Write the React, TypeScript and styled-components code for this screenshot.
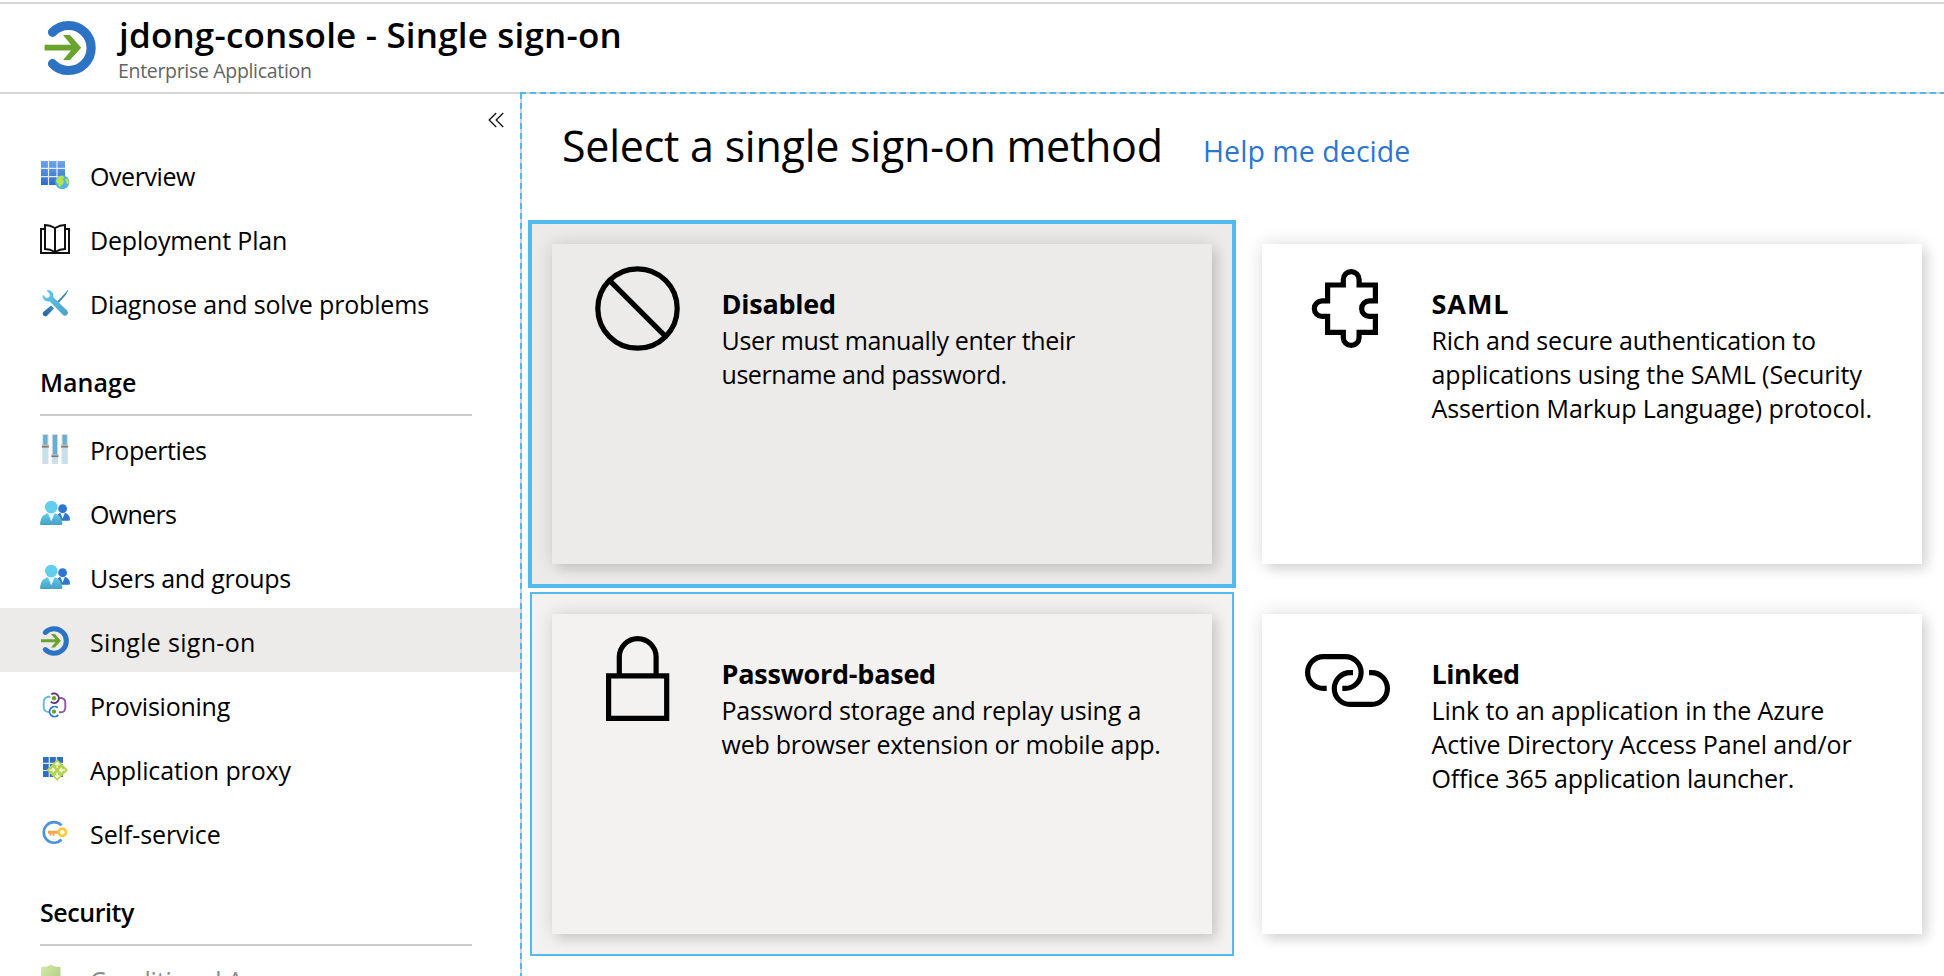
import React from 'react';
import styled, { createGlobalStyle, css } from 'styled-components';

const GlobalStyle = createGlobalStyle`
  * { box-sizing: border-box; }
  body {
    margin: 0;
    background: #fff;
    color: #000;
    font-family: 'Open Sans', 'Noto Sans', sans-serif;
    overflow: hidden;
  }
`;

const Page = styled.div`
  display: flex;
  flex-direction: column;
  height: 976px;
  padding-top: 2px;
  overflow: hidden;
`;

const Header = styled.header`
  display: flex;
  flex: none;
  height: 92px;
  padding-left: 44px;
  border-top: 2px solid #d6d6d6;
  border-bottom: 2px solid #d6d6d6;
`;

const HeaderLogo = styled.div`
  width: 52px;
  height: 56px;
  margin-top: 16px;
  svg { display: block; width: 52px; height: 56px; }
`;

const HeaderText = styled.div`
  display: flex;
  flex-direction: column;
  margin-left: 22px;
`;

const AppTitle = styled.h1`
  margin: 7px 0 0;
  padding-left: 1px;
  font-size: 35px;
  font-weight: 600;
  line-height: 48px;
  letter-spacing: 0.18px;
  white-space: pre;
`;

const AppKind = styled.div`
  margin-top: -1px;
  font-size: 19.5px;
  line-height: 26px;
  letter-spacing: -0.32px;
  color: #646464;
`;

const Body = styled.div`
  display: flex;
  flex: 1;
  min-height: 0;
`;

const Sidebar = styled.nav`
  flex: none;
  width: 520px;
  overflow: hidden;
`;

const CollapseBar = styled.div`
  display: flex;
  justify-content: flex-end;
  height: 48px;
  padding: 18px 16px 0 0;
  svg { display: block; width: 16px; height: 16px; }
`;

const NavRow = styled.a<{ $selected?: boolean; $faded?: boolean }>`
  display: flex;
  gap: 20px;
  height: 64px;
  padding-left: 40px;
  background: ${(p) => (p.$selected ? '#edebe9' : 'transparent')};
  color: ${(p) => (p.$faded ? '#8a8a8a' : '#000')};
`;

const NavIcon = styled.span`
  width: 30px;
  height: 30px;
  margin-top: 18px;
  svg { display: block; width: 30px; height: 30px; overflow: visible; }
`;

const NavLabel = styled.span<{ $track: number }>`
  margin-top: 16px;
  font-size: 25px;
  line-height: 36px;
  letter-spacing: ${(p) => p.$track}px;
  white-space: nowrap;
`;

const SectionHeading = styled.h2<{ $track: number }>`
  height: 82px;
  margin: 0 48px 0 40px;
  padding-top: 16px;
  border-bottom: 2px solid #ccc;
  font-size: 25px;
  font-weight: 600;
  line-height: 64px;
  letter-spacing: ${(p) => p.$track}px;
`;

const dash = css`#50b8ee 0 6px, #d2d2d2 6px 10px`;

const Main = styled.main`
  flex: 1;
  min-width: 0;
  margin-top: -2px;
  padding: 2px 0 0 2px;
  background:
    repeating-linear-gradient(to right, ${dash}) 0 0 / 100% 2px no-repeat,
    repeating-linear-gradient(to bottom, ${dash}) 0 1px / 2px 100% no-repeat,
    #fff;
`;

const HeadingRow = styled.div`
  display: flex;
  align-items: baseline;
  height: 128px;
  padding: 23px 0 0 40px;
`;

const PageHeading = styled.h2`
  margin: 0;
  width: 641px;
  font-size: 43px;
  font-weight: 400;
  line-height: 58px;
  letter-spacing: -0.25px;
  white-space: nowrap;
`;

const HelpLink = styled.a`
  font-size: 28.5px;
  letter-spacing: 0.06px;
  color: #2b76d2;
`;

const MethodGrid = styled.div`
  display: grid;
  grid-template-columns: 704px 704px;
  grid-auto-rows: 364px;
  gap: 6px;
  padding-left: 8px;
`;

type Tone = 'plain' | 'hover' | 'selected';
const toneFill: Record<Tone, string> = { plain: '#fff', hover: '#f3f2f0', selected: '#edebe9' };

const MethodCell = styled.div<{ $tone: Tone }>`
  padding: 20px;
  border: 2px solid ${(p) => (p.$tone === 'plain' ? 'transparent' : '#53baee')};
  background: ${(p) => toneFill[p.$tone]};
  box-shadow: ${(p) => (p.$tone === 'selected' ? '0 0 0 2px #53baee' : 'none')};
`;

const MethodCard = styled.article<{ $tone: Tone }>`
  display: flex;
  height: 320px;
  padding-left: 43px;
  background: ${(p) => toneFill[p.$tone]};
  box-shadow: 0 0 18px rgba(0, 0, 0, 0.14), 6px 6px 10px rgba(0, 0, 0, 0.09);
`;

const MethodIcon = styled.div`
  flex: none;
  width: 85px;
  height: 85px;
  margin: 22px 41px 0 0;
  svg {
    display: block;
    width: 85px;
    height: 85px;
    fill: none;
    stroke: #000;
    stroke-width: 5.2;
  }
`;

const MethodText = styled.div`
  padding-top: 41px;
`;

const MethodTitle = styled.h3<{ $track: number }>`
  margin: 0;
  padding-left: 0.5px;
  font-size: 27px;
  font-weight: 700;
  line-height: 38px;
  letter-spacing: ${(p) => p.$track}px;
`;

const MethodLine = styled.div<{ $track: number }>`
  padding-left: 0.5px;
  font-size: 25px;
  line-height: 34px;
  letter-spacing: ${(p) => p.$track}px;
  white-space: nowrap;
`;

const SignOnGlyph = ({ box }: { box: string }) => (
  <svg viewBox={box}>
    <path d="M8.5 12.3A22.5 22.5 0 1 1 8.5 43.7" fill="none" stroke="#2c73c3" strokeWidth="9.2" strokeLinecap="round" />
    <path d="M.6 24.7H27L19 15H26L37.2 27.7L26 40H19L27 30.5H.6z" fill="#69a42e" />
  </svg>
);

const OverviewIcon = () => (
  <svg viewBox="0 0 30 30">
    <defs>
      <linearGradient id="ov" x1="0" y1="0" x2="0" y2="1">
        <stop offset="0" stopColor="#6fa5ec" />
        <stop offset="1" stopColor="#2b6cc4" />
      </linearGradient>
    </defs>
    <path d="M1 1h24v24H1z" fill="url(#ov)" />
    <path d="M8.5 1v24M17 1v24M1 8.3h24M1 16.7h24" stroke="#e3edfb" strokeWidth="1.2" />
    <circle cx="22.3" cy="22.3" r="7" fill="#55b4dd" />
    <path d="M18 17.5c2-2 4-2 5.500-1.300l.5 1.800-1.500 1 1.500 2.500-1 2.500-2.200 1.500-.8 2.500-2-4-2.300-3zM25 19l2.500-.5 1.500 3-.5 3-2-1.200z" fill="#b5e24f" />
  </svg>
);

const BookIcon = () => (
  <svg viewBox="0 0 30 30" fill="none" stroke="#111" strokeWidth="2">
    <path d="M5 5H1V29H29V5H25" />
    <path d="M15 4Q10 1 5 1V25Q10 25 15 28Q20 25 25 25V1Q20 1 15 4V28" />
  </svg>
);

const ToolsIcon = () => (
  <svg viewBox="0 0 30 30">
    <defs>
      <linearGradient id="wr" x1="0" y1="0" x2="1" y2="1">
        <stop offset="0" stopColor="#62cdf0" />
        <stop offset="1" stopColor="#4b9fc4" />
      </linearGradient>
      <linearGradient id="sd" x1="1" y1="0" x2="0" y2="1">
        <stop offset="0" stopColor="#3f8bb5" />
        <stop offset="1" stopColor="#2360a5" />
      </linearGradient>
    </defs>
    <path d="M28 1.700l.3.700-3 5-7.500 8.600-1.500-1.500 8-8.600z" fill="#3e86b2" />
    <path d="M11 17.500l3 3-7 7.300q-1.800 1.300-3.500-.2-1.700-1.700-.2-3.500z" fill="url(#sd)" />
    <path d="M6.500 2.500q3-1.200 5.500 1.200 2.200 2.500 1.400 5.500L27.300 22.800q1.400 2-.3 4-2 1.700-4 .3L9.500 13.300q-3 .9-5.500-1.200-2.300-2.500-1.300-5.300l3.500 3.200 3-.7.700-3z" fill="url(#wr)" />
  </svg>
);

const PropertiesIcon = () => (
  <svg viewBox="0 0 30 30">
    {[
      [2.2, 12],
      [11.8, 21.6],
      [21.5, 12],
    ].map(([x, y]) => (
      <g key={x}>
        <path d={`M${x} 0h6.300v30h-6.300z`} fill="#dcdcdc" />
        <path d={`M${x + 1} 1h4.300v28h-4.300z`} fill="#c3e2ef" />
        <path d={`M${x + 1} 1h4.300V${y}h-4.300z`} fill="#68aed3" />
        <path d={`M${x - 0.3} ${y - 1.5}h6.900v3h-6.900z`} fill="#b9b9b9" />
        <path d={`M${x - 0.3} ${y}h6.900v1.500h-6.900z`} fill="#7c7c7c" />
      </g>
    ))}
  </svg>
);

const PeopleIcon = () => (
  <svg viewBox="0 0 30 30">
    <defs>
      <linearGradient id="pp" x1="0" y1="0" x2="0" y2="1">
        <stop offset="0" stopColor="#62cdec" />
        <stop offset="1" stopColor="#479fc4" />
      </linearGradient>
    </defs>
    <path d="M15 22.700q1-8 7.600-8.200 7 .3 7.400 7.200 0 1-1 1z" fill="#2f74cf" />
    <path d="M20.300 15h4.600l-2.300 5.800z" fill="#e6f2fa" />
    <circle cx="22.6" cy="10.7" r="4.4" fill="#2f74cf" />
    <path d="M0 25.500Q1 15.200 11.200 14.800 21 15.200 22.400 25.500q0 1.500-1.300 1.500H1.300Q0 27 0 25.500z" fill="url(#pp)" />
    <path d="M7.800 15h7l-3.500 8.300z" fill="#e8f5fb" />
    <circle cx="11.3" cy="9" r="6.3" fill="#62cdec" />
  </svg>
);

const ProvisioningIcon = () => (
  <svg viewBox="0 0 30 30" fill="none" strokeWidth="1.9">
    <path d="M10.500 6.700H8.500Q3.700 7.500 3.700 12v5.500q.3 4.300 5.600 4.800" stroke="#6db9dc" />
    <path d="M19.300 8h2q4 .7 4 4.700v5q-.3 4.300-4.300 4.600h-2" stroke="#8d5aa8" />
    <path d="M11.300 4.300a4.800 4.800 0 1 1-.5 7.500" stroke="#5f2f80" />
    <path d="M17.800 17.800a5 5 0 1 0 .4 7.200" stroke="#2f7cd0" />
    <circle cx="14" cy="8.3" r="2.2" fill="#6aa52b" />
    <circle cx="14" cy="21.6" r="2.2" fill="#6aa52b" />
  </svg>
);

const ProxyIcon = () => (
  <svg viewBox="0 0 30 30">
    <path d="M3 3h20v20H3z" fill="#2c70c4" />
    <path d="M9.300 3v20M16.400 3v20M3 9.400h20M3 16.500h20" stroke="#dfeafa" strokeWidth="1.2" />
    <path d="M17.200 5.300L28 16 17.200 26.800 6.500 16z" fill="#b5d44c" />
    <path
      d="M17.200 14V9M15 10.800l2.200-2.200 2.200 2.200M17.200 18.500v5M15 21.500l2.200 2.200 2.200-2.200M9.500 16.200h5M12.500 14l2.200 2.200-2.200 2.200M25 16.200h-5M22 14l-2.200 2.200 2.200 2.200"
      fill="none"
      stroke="#fff"
      strokeWidth="1.3"
    />
  </svg>
);

const SelfServiceIcon = () => (
  <svg viewBox="0 0 30 30">
    <path d="M21.500 7.300A10.300 10.300 0 1 0 21.500 21.500" fill="none" stroke="#4f92d8" strokeWidth="2.6" />
    <path d="M8 12.800h11v3h-4.500v2h-2v-2h-1.200v2H9.600v-2H8z" fill="#f3a64a" />
    <circle cx="22.4" cy="14.3" r="3.7" fill="none" stroke="#fbc93a" strokeWidth="2.6" />
  </svg>
);

const ShieldIcon = () => (
  <svg viewBox="0 0 30 30">
    <defs>
      <linearGradient id="sh" x1="0" y1="0" x2="1" y2="1">
        <stop offset="0" stopColor="#d5eba9" />
        <stop offset="1" stopColor="#a6c67d" />
      </linearGradient>
    </defs>
    <path d="M1 3q5.500.3 9.800-2.200Q15 3.300 20.500 3v12q-1 8-9.700 13Q2 23 1 15z" fill="url(#sh)" />
  </svg>
);

type NavEntry = { label: string; track: number; icon: React.ReactNode; selected?: boolean; faded?: boolean };

const topItems: NavEntry[] = [
  { label: 'Overview', track: -0.42, icon: <OverviewIcon /> },
  { label: 'Deployment Plan', track: -0.18, icon: <BookIcon /> },
  { label: 'Diagnose and solve problems', track: -0.16, icon: <ToolsIcon /> },
];

const manageItems: NavEntry[] = [
  { label: 'Properties', track: -0.46, icon: <PropertiesIcon /> },
  { label: 'Owners', track: -0.68, icon: <PeopleIcon /> },
  { label: 'Users and groups', track: -0.26, icon: <PeopleIcon /> },
  { label: 'Single sign-on', track: 0.31, icon: <SignOnGlyph box="-1.2 0.5 55 55" />, selected: true },
  { label: 'Provisioning', track: -0.24, icon: <ProvisioningIcon /> },
  { label: 'Application proxy', track: -0.13, icon: <ProxyIcon /> },
  { label: 'Self-service', track: -0.07, icon: <SelfServiceIcon /> },
];

const securityItems: NavEntry[] = [
  { label: 'Conditional Access', track: -0.2, icon: <ShieldIcon />, faded: true },
];

const NavList = ({ items }: { items: NavEntry[] }) => (
  <>
    {items.map((item) => (
      <NavRow key={item.label} $selected={item.selected} $faded={item.faded}>
        <NavIcon>{item.icon}</NavIcon>
        <NavLabel $track={item.track}>{item.label}</NavLabel>
      </NavRow>
    ))}
  </>
);

type Method = { title: string; track: number; tone: Tone; lines: [string, number][]; icon: React.ReactNode };

const methods: Method[] = [
  {
    title: 'Disabled',
    track: -0.25,
    tone: 'selected',
    lines: [
      ['User must manually enter their', -0.35],
      ['username and password.', -0.44],
    ],
    icon: (
      <svg viewBox="0 0 85 85">
        <circle cx="42.5" cy="42.5" r="39.7" />
        <path d="M14.700 14.700L70.500 70.300" />
      </svg>
    ),
  },
  {
    title: 'SAML',
    track: 0.95,
    tone: 'plain',
    lines: [
      ['Rich and secure authentication to', -0.19],
      ['applications using the SAML (Security', -0.06],
      ['Assertion Markup Language) protocol.', -0.09],
    ],
    icon: (
      <svg viewBox="0 0 85 85">
        <path d="M22.600 19H38.300V13.500A7.900 7.900 0 0 1 54.100 13.500V19H70.400V34.900H64.400A7.750 7.750 0 0 0 64.400 50.400H70.400V66.400H54.100V71.500A7.900 7.900 0 0 1 38.300 71.500V66.400H22.600V50.400H17.100A7.750 7.750 0 0 1 17.100 34.900H22.600Z" />
      </svg>
    ),
  },
  {
    title: 'Password-based',
    track: -0.24,
    tone: 'hover',
    lines: [
      ['Password storage and replay using a', -0.18],
      ['web browser extension or mobile app.', -0.24],
    ],
    icon: (
      <svg viewBox="0 0 85 85">
        <path d="M13.600 39.900H71.700V82.400H13.600Z" />
        <path d="M24.300 39.900V21A18.400 18.400 0 0 1 61.100 21V39.900" />
      </svg>
    ),
  },
  {
    title: 'Linked',
    track: -0.5,
    tone: 'plain',
    lines: [
      ['Link to an application in the Azure', -0.08],
      ['Active Directory Access Panel and/or', -0.11],
      ['Office 365 application launcher.', -0.18],
    ],
    icon: (
      <svg viewBox="0 0 85 85">
        <path d="M21.700 52.400H18.500A15.900 15.900 0 0 1 18.500 20.600H40.200A15.900 15.900 0 0 1 40.200 52.400H37.300" />
        <path d="M48 36.600H45.200A15.900 15.900 0 0 0 45.200 68.400H66.500A15.900 15.900 0 0 0 66.500 36.600H64" />
      </svg>
    ),
  },
];

export default function App() {
  return (
    <Page>
      <GlobalStyle />
      <Header>
        <HeaderLogo>
          <SignOnGlyph box="0 0 52 56" />
        </HeaderLogo>
        <HeaderText>
          <AppTitle>jdong-console - Single sign-on</AppTitle>
          <AppKind>Enterprise Application</AppKind>
        </HeaderText>
      </Header>
      <Body>
        <Sidebar>
          <CollapseBar>
            <svg viewBox="0 0 16 16" fill="none" stroke="#111" strokeWidth="1.3">
              <path d="M8.200 1L1.200 8L8.200 15M15.200 1L8.200 8L15.200 15" />
            </svg>
          </CollapseBar>
          <NavList items={topItems} />
          <SectionHeading $track={0.04}>Manage</SectionHeading>
          <NavList items={manageItems} />
          <SectionHeading $track={-0.45}>Security</SectionHeading>
          <NavList items={securityItems} />
        </Sidebar>
        <Main>
          <HeadingRow>
            <PageHeading>Select a single sign-on method</PageHeading>
            <HelpLink>Help me decide</HelpLink>
          </HeadingRow>
          <MethodGrid>
            {methods.map((m) => (
              <MethodCell key={m.title} $tone={m.tone}>
                <MethodCard $tone={m.tone}>
                  <MethodIcon>{m.icon}</MethodIcon>
                  <MethodText>
                    <MethodTitle $track={m.track}>{m.title}</MethodTitle>
                    {m.lines.map(([text, track]) => (
                      <MethodLine key={text} $track={track}>
                        {text}
                      </MethodLine>
                    ))}
                  </MethodText>
                </MethodCard>
              </MethodCell>
            ))}
          </MethodGrid>
        </Main>
      </Body>
    </Page>
  );
}
